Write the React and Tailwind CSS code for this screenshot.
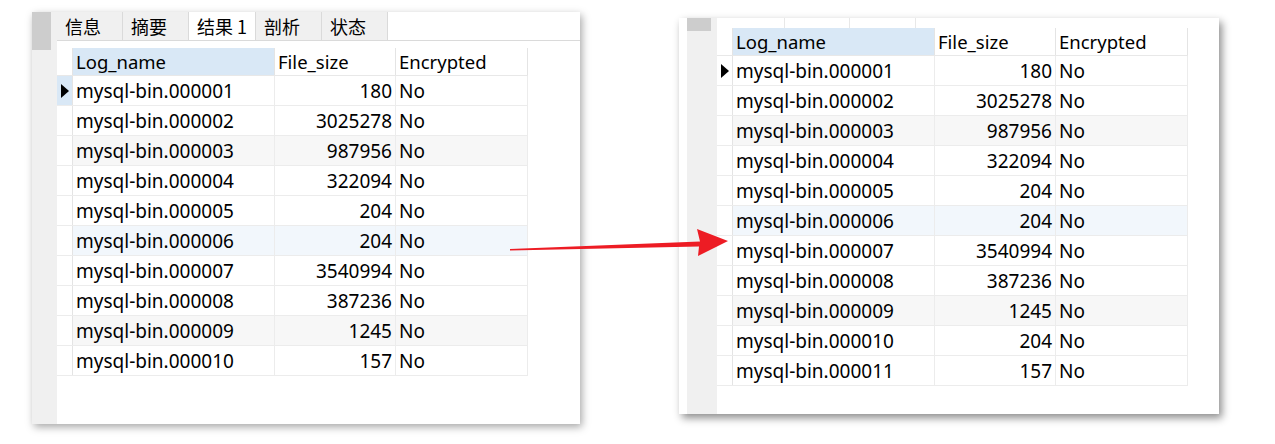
import React from 'react';

const leftRows = [
  ['mysql-bin.000001', '180'],
  ['mysql-bin.000002', '3025278'],
  ['mysql-bin.000003', '987956'],
  ['mysql-bin.000004', '322094'],
  ['mysql-bin.000005', '204'],
  ['mysql-bin.000006', '204'],
  ['mysql-bin.000007', '3540994'],
  ['mysql-bin.000008', '387236'],
  ['mysql-bin.000009', '1245'],
  ['mysql-bin.000010', '157'],
];

const rightRows = [
  ['mysql-bin.000001', '180'],
  ['mysql-bin.000002', '3025278'],
  ['mysql-bin.000003', '987956'],
  ['mysql-bin.000004', '322094'],
  ['mysql-bin.000005', '204'],
  ['mysql-bin.000006', '204'],
  ['mysql-bin.000007', '3540994'],
  ['mysql-bin.000008', '387236'],
  ['mysql-bin.000009', '1245'],
  ['mysql-bin.000010', '204'],
  ['mysql-bin.000011', '157'],
];

const rowBg = (i) => (i === 2 || i === 8 ? 'bg-[#f7f7f7]' : i === 5 ? 'bg-[#f2f7fc]' : 'bg-white');

const ResultGrid = ({ rows, markBlue }) => (
  <div className="flex flex-col w-[471px]">
    {/* header */}
    <div className="flex h-[28px] border-b border-[#e8e8e8] text-[18.5px]">
      <div className="w-[16px] border-r border-[#e4e4e4]" />
      <div className="w-[202px] bg-[#d9e8f6] px-[3px] pt-[1px] flex items-center border-r border-[#e4e4e4]">Log_name</div>
      <div className="w-[121px] px-[3px] pt-[1px] flex items-center border-r border-[#e4e4e4]">File_size</div>
      <div className="w-[132px] px-[3px] pt-[1px] flex items-center border-r border-[#e4e4e4]">Encrypted</div>
    </div>
    {rows.map(([name, size], i) => (
      <div key={name} className={`flex h-[30px] border-b border-[#ececec] text-[19px] ${rowBg(i)}`}>
        <div
          className={`w-[16px] flex items-center justify-start border-r border-[#e4e4e4] ${
            i === 0 && markBlue ? 'bg-[#d9e8f6]' : 'bg-white'
          }`}
        >
          {i === 0 && (
            <svg width="10" height="16" viewBox="0 0 10 16" className="ml-[3px]">
              <path d="M1 1 L9 8 L1 15 Z" fill="#000" />
            </svg>
          )}
        </div>
        <div className="w-[202px] px-[3px] pt-[2px] flex items-center border-r border-[#ececec]">{name}</div>
        <div className="w-[121px] px-[3px] pt-[2px] flex items-center justify-end border-r border-[#ececec]">{size}</div>
        <div className="w-[132px] px-[3px] pt-[2px] flex items-center border-r border-[#ececec]">No</div>
      </div>
    ))}
  </div>
);

const tabs = ['信息', '摘要', '结果 1', '剖析', '状态'];

export default function App() {
  return (
    <div
      className="relative w-[1275px] h-[444px] bg-white overflow-hidden text-[18px] text-black"
      style={{ fontFamily: '"Noto Sans", "Noto Sans CJK SC", sans-serif' }}
    >
      <div className="flex items-start">
        {/* Left window */}
        <div className="ml-[32px] mt-[12px] w-[548px] h-[412px] bg-white flex shadow-[2px_3px_8px_rgba(0,0,0,0.35)]">
          <div className="w-[25px] bg-[#f0f0f0] flex flex-col">
            <div className="w-[19px] h-[38px] bg-[#cdcdcd]" />
          </div>
          <div className="flex-1 flex flex-col">
            <div className="flex h-[29px] border-b border-[#dadada]">
              {tabs.map((t, i) => (
                <div
                  key={t}
                  className={`h-full flex items-center pl-[8px] border-r border-[#dadada] text-[18px] ${
                    i === 2 ? 'bg-white w-[67px]' : 'bg-[#f0f0f0] w-[66px]'
                  }`}
                  style={{ fontFamily: '"Noto Sans CJK SC", sans-serif' }}
                >
                  {t}
                </div>
              ))}
            </div>
            <div className="mt-[7px]">
              <ResultGrid rows={leftRows} markBlue />
            </div>
          </div>
        </div>

        {/* Right window */}
        <div className="ml-[99px] mt-[18px] w-[540px] h-[396px] bg-white flex shadow-[3px_4px_8px_rgba(0,0,0,0.45)]">
          <div className="ml-[8px] w-[30px] bg-[#f0f0f0] flex flex-col">
            <div className="w-[24px] h-[13px] bg-[#cdcdcd]" />
          </div>
          <div className="flex-1 flex flex-col">
            <div className="flex h-[10px]">
              <div className="w-[68px] border-r border-[#e8e8e8]" />
              <div className="w-[65px] border-r border-[#e8e8e8]" />
              <div className="w-[66px] border-r border-[#e8e8e8]" />
            </div>
            <ResultGrid rows={rightRows} />
          </div>
        </div>
      </div>

      {/* Arrow */}
      <svg className="absolute left-0 top-0" width="1275" height="444" viewBox="0 0 1275 444">
        <polygon points="510,249 700,241.5 697,229 728,241 698,256 699,246.5 510,250.5" fill="#ed1c24" />
      </svg>
    </div>
  );
}
